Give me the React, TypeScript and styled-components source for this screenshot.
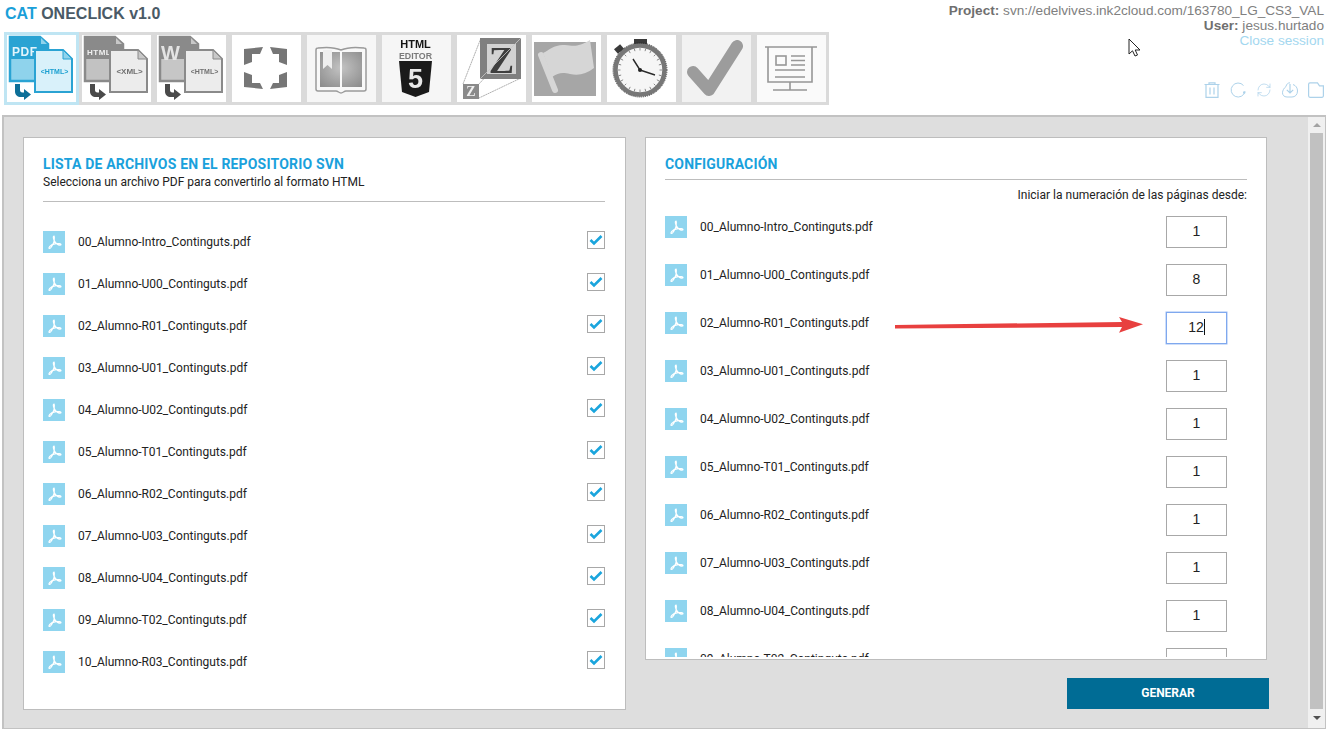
import React from "react";
import styled, { createGlobalStyle } from "styled-components";
import { RefreshCw } from "lucide-react";

const GlobalStyle = createGlobalStyle`
  html, body {
    margin: 0;
    padding: 0;
    height: 100%;
    overflow: hidden;
    background: #ffffff;
    font-family: "Liberation Sans", Arial, sans-serif;
  }
`;

const Page = styled.div`
  position: relative;
  width: 1328px;
  height: 731px;
  display: flex;
  flex-direction: column;
  box-sizing: border-box;
`;

const Header = styled.header`
  height: 115px;
  padding: 0 4px;
  display: flex;
  justify-content: space-between;
  box-sizing: border-box;
`;

const Brand = styled.div`
  display: flex;
  flex-direction: column;
`;

const Title = styled.h1`
  margin: 5px 0 0 1px;
  height: 27px;
  line-height: 17px;
  font-size: 16px;
  font-weight: 700;
  color: #4a5a66;

  span {
    color: #1a9fd9;
  }
`;

const Toolbar = styled.div`
  display: flex;
`;

const Tile = styled.div<{ $active?: boolean; $bg?: string }>`
  width: 75px;
  height: 73px;
  box-sizing: border-box;
  border: 3px solid ${(p) => (p.$active ? "#bfe5f3" : "#dadada")};
  background: ${(p) => p.$bg || "#ffffff"};

  svg {
    display: block;
    margin: -4px -3px;
    filter: blur(0.3px);
  }
`;

const Session = styled.div`
  width: 420px;
  padding-top: 3px;
  display: flex;
  flex-direction: column;
  align-items: flex-end;
  font-size: 13.6px;
  line-height: 15px;
  color: #808080;

  b {
    color: #6f6f6f;
  }
`;

const CloseLink = styled.a`
  color: #a3d7ef;
`;

const ActionBar = styled.div`
  margin-top: 34px;
  display: flex;
  gap: 10px;
  color: #add2ea;
`;

const Main = styled.main`
  position: relative;
  margin: 0 2px;
  height: 614px;
  box-sizing: border-box;
  border: solid #c2c2c2;
  border-width: 2px 1px 1px 2px;
  background: #dedede;
  display: flex;
  padding: 20px 0 0 19px;
`;

const Card = styled.section`
  box-sizing: border-box;
  background: #ffffff;
  border: 1px solid #bdbdbd;
  padding: 18px 19px 0;
  font-family: Roboto, "Liberation Sans", sans-serif;
  display: flex;
  flex-direction: column;
`;

const LeftCard = styled(Card)`
  width: 603px;
  height: 573px;
  padding-right: 20px;
`;

const RightColumn = styled.div`
  margin-left: 19px;
  width: 624px;
  display: flex;
  flex-direction: column;
  align-items: flex-start;
`;

const RightCard = styled(Card)`
  width: 622px;
  height: 523px;
  padding-bottom: 2px;
`;

const CardTitle = styled.h2`
  margin: 0;
  font-size: 14px;
  line-height: 16px;
  font-weight: 700;
  letter-spacing: 0.18px;
  color: #1aa1dc;
`;

const CardSub = styled.p`
  margin: 2px 0 0;
  font-size: 12px;
  line-height: 16px;
  color: #222222;
`;

const Rule = styled.hr<{ $top: number }>`
  margin: ${(p) => p.$top}px 0 0;
  border: 0;
  border-top: 1px solid #bdbdbd;
`;

const FileRow = styled.div`
  height: 42px;
  display: flex;
  align-items: flex-start;
  font-size: 12px;
  color: #222222;
`;

const FileList = styled.div`
  margin-top: 29px;
`;

const PdfBox = styled.span`
  width: 22px;
  height: 22px;
  flex: none;
  background: #8fd5ef;
  display: flex;
  align-items: center;
  justify-content: center;
`;

const FileName = styled.span`
  flex: 1;
  margin-left: 13px;
  line-height: 22px;
`;

const Check = styled.span`
  width: 18px;
  height: 18px;
  box-sizing: border-box;
  border: 1px solid #a8a8a8;
  display: flex;
  align-items: center;
  justify-content: center;
`;

const StartHint = styled.div`
  margin-top: 7px;
  text-align: right;
  font-size: 12px;
  line-height: 16px;
  color: #222222;
`;

const ScrollArea = styled.div`
  margin-top: 13px;
  flex: 1;
  overflow: hidden;
`;

const PageRow = styled.div`
  height: 48px;
  display: flex;
  align-items: flex-start;
  font-size: 12px;
  color: #222222;
`;

const PageInput = styled.div<{ $focus?: boolean }>`
  width: 61px;
  height: 32px;
  margin-right: 20px;
  box-sizing: border-box;
  border: 1px solid ${(p) => (p.$focus ? "#7fa8ee" : "#a8a8a8")};
  box-shadow: ${(p) => (p.$focus ? "0 0 0 0.5px #9dbcf2" : "none")};
  font-family: "Liberation Sans", Arial, sans-serif;
  font-size: 14px;
  line-height: 29px;
  text-align: center;
  color: #222222;
`;

const Caret = styled.i`
  display: inline-block;
  width: 1px;
  height: 16px;
  vertical-align: -3px;
  background: #111111;
`;

const Generate = styled.button`
  margin: 18px 0 0 422px;
  width: 202px;
  height: 31px;
  border: 0;
  padding: 0 0 2px;
  background: #006c95;
  color: #ffffff;
  font-family: Roboto, "Liberation Sans", sans-serif;
  font-size: 12px;
  font-weight: 700;
`;

const Scrollbar = styled.div`
  position: absolute;
  top: 0;
  right: 0;
  width: 17px;
  height: 100%;
  background: #f0f0f0;
  display: flex;
  flex-direction: column;
  align-items: center;
`;

const Thumb = styled.div`
  flex: 1;
  width: 13px;
  margin: 16px 0 19px;
  background: #c1c1c1;
`;

const ArrowGlyph = styled.div<{ $up?: boolean }>`
  position: absolute;
  ${(p) => (p.$up ? "top: 6px;" : "bottom: 8px;")}
  width: 0;
  height: 0;
  border-left: 4px solid transparent;
  border-right: 4px solid transparent;
  ${(p) => (p.$up ? "border-bottom: 4px solid #a3a3a3;" : "border-top: 4px solid #505050;")}
`;

const RedArrow = styled.svg`
  position: absolute;
  left: 895px;
  top: 315px;
`;

const Pointer = styled.svg`
  position: absolute;
  left: 1128px;
  top: 38px;
`;

const files = [
  "00_Alumno-Intro_Continguts.pdf",
  "01_Alumno-U00_Continguts.pdf",
  "02_Alumno-R01_Continguts.pdf",
  "03_Alumno-U01_Continguts.pdf",
  "04_Alumno-U02_Continguts.pdf",
  "05_Alumno-T01_Continguts.pdf",
  "06_Alumno-R02_Continguts.pdf",
  "07_Alumno-U03_Continguts.pdf",
  "08_Alumno-U04_Continguts.pdf",
  "09_Alumno-T02_Continguts.pdf",
  "10_Alumno-R03_Continguts.pdf",
];

const pageStarts = ["1", "8", "12", "1", "1", "1", "1", "1", "1", "1"];

function PdfIcon() {
  return (
    <PdfBox>
      <svg width="18" height="18" viewBox="0 0 18 18" fill="none" stroke="#ffffff" strokeWidth="1.2">
        <path d="M9 3c-.9 0-.9 1.600 0 4 .6 1.700 2 3.300 3.300 4.200 1.400 1 3.700 1.300 3.700.3 0-1-2.700-1.100-5-.8-2.700.4-5 1.200-6.200 2.600-1 1.200-1 2.200-.3 2.200.9 0 2.500-2.400 3.600-4.800C9 10 9.900 4 9 3z" />
      </svg>
    </PdfBox>
  );
}

function CheckMark() {
  return (
    <Check>
      <svg width="14" height="12" viewBox="0 0 14 12" fill="none" stroke="#1aa5dd" strokeWidth="2.6">
        <path d="M1.500 6 5 9.500 12.500 2" />
      </svg>
    </Check>
  );
}

type DocsProps = {
  stroke: string;
  fold: string;
  backFill: string;
  frontFill: string;
  arrow: string;
  badge: string;
  badgeSize: number;
  badgeX: number;
  badgeY: number;
  label: string;
  inner: string;
  innerSize: number;
  innerColor: string;
};

// two overlapping sheets with a turn-down arrow, used by the first three tiles
function DocsIcon(p: DocsProps) {
  return (
    <svg width="75" height="74" viewBox="0 0 75 74">
      <path d="M6 6h30l8 7v37H6z" fill={p.backFill} stroke={p.stroke} strokeWidth="2.5" />
      <path d="M6 6h30l8 7v15H6z" fill={p.stroke} />
      <path d="M37 7v6h6z" fill={p.fold} />
      <text x={p.badgeX} y={p.badgeY} fontFamily="Liberation Sans" fontWeight="700" fontSize={p.badgeSize} letterSpacing="0.5" fill={p.badge}>
        {p.label}
      </text>
      <path d="M31 19h28l9 9v33H31z" fill={p.frontFill} stroke={p.stroke} strokeWidth="2" />
      <path d="M59 19v9h9z" fill={p.fold} stroke={p.stroke} strokeWidth="1" />
      <text x="50.500" y="43" textAnchor="middle" fontFamily="Liberation Sans" fontWeight="700" fontSize={p.innerSize} fill={p.innerColor}>
        {p.inner}
      </text>
      <path d="M11 53h5v6c0 1.500.8 2.500 2.500 2.500H20V58l7 5.500-7 5.500v-3h-3c-3.500 0-6-2-6-5.500z" fill={p.arrow} />
    </svg>
  );
}

function FullscreenIcon() {
  return (
    <svg width="75" height="74" viewBox="0 0 75 74" fill="#767676">
      <path d="M15 18 34 16l-3 7h-8v8l-8 3z" />
      <path d="M58 18 41 16l3 7h6v8l8 3z" />
      <path d="M15 56l19 2-3-6h-8v-8l-8-3z" />
      <path d="M58 56l-17 2 3-6h6v-8l8-3z" />
    </svg>
  );
}

function BookIcon() {
  return (
    <svg width="75" height="74" viewBox="0 0 75 74">
      <defs>
        <radialGradient id="bookShade" cx="50%" cy="45%" r="70%">
          <stop offset="0%" stopColor="#c3c3c3" />
          <stop offset="100%" stopColor="#8d8d8d" />
        </radialGradient>
      </defs>
      <path d="M14 17c8-1 16-1 23 2 7-3 15-3 23-2 1 0 2 1 2 2v39c0 1-1 2-2 2H42c-2 0-3 2-5 2s-3-2-5-2H14c-1 0-2-1-2-2V19c0-1 1-2 2-2z" fill="#f8f8f8" stroke="#9a9a9a" strokeWidth="1.5" />
      <path d="M16 21h20v35H16zM38 21h20v35H38z" fill="url(#bookShade)" />
      <path d="M19 19h9v19l-4.500-4-4.500 4z" fill="#efefef" />
    </svg>
  );
}

function Html5Icon() {
  return (
    <svg width="75" height="74" viewBox="0 0 75 74" fontFamily="Liberation Sans" fontWeight="700" textAnchor="middle">
      <text x="36.500" y="16.500" fontSize="11" fill="#161616">HTML</text>
      <text x="36.500" y="27.500" fontSize="8.800" fill="#7a7a7a">EDITOR</text>
      <path d="M20 30h33l-3 31-13.500 5L23 61z" fill="#1a1a1a" />
      <text x="36.500" y="57" fontSize="27" fill="#e8e8e8">5</text>
    </svg>
  );
}

function ZoomIcon() {
  return (
    <svg width="75" height="74" viewBox="0 0 75 74">
      <path d="M27 7 9 53M67 7 25 53M67 47 25 67" stroke="#9c9c9c" strokeWidth="0.8" fill="none" strokeDasharray="2 0.5" />
      <rect x="26" y="7" width="41" height="41" fill="#7f7f7f" />
      <rect x="33" y="13" width="29" height="30" fill="#d2d2d2" />
      <text x="47.500" y="42" textAnchor="middle" fontFamily="Liberation Serif" fontWeight="700" fontSize="38" fill="#3e3e3e">Z</text>
      <path d="M67 7 26 48" stroke="#c8c8c8" strokeWidth="0.8" />
      <rect x="9" y="53" width="16" height="15" fill="#8a8a8a" />
      <text x="17" y="65" textAnchor="middle" fontFamily="Liberation Serif" fontWeight="700" fontSize="14" fill="#f0f0f0">Z</text>
    </svg>
  );
}

function FlagIcon() {
  return (
    <svg width="75" height="74" viewBox="0 0 75 74">
      <rect x="5" y="11" width="62" height="54" fill="#a6a6a6" />
      <path d="M12 24 26 59" stroke="#d6d6d6" strokeWidth="6" strokeLinecap="round" />
      <path d="M14 22c6-3 12-9 22-8 9 1 14 2 25-5l4 28c-8 6-15 8-24 6-8-2-12-1-18 3z" fill="#d6d6d6" />
    </svg>
  );
}

function StopwatchIcon() {
  const ticks = Array.from({ length: 24 }, (_, i) => i * 15);
  return (
    <svg width="75" height="74" viewBox="0 0 75 74">
      <rect x="30" y="8" width="13" height="6" fill="#3a3a3a" />
      <rect x="11" y="15" width="8" height="6" fill="#3a3a3a" transform="rotate(-40 15 18)" />
      <circle cx="36" cy="39" r="24.500" fill="#f6f6f6" stroke="#777777" strokeWidth="4.500" />
      <circle cx="36" cy="39" r="27" fill="none" stroke="#222222" strokeWidth="0.8" strokeDasharray="1 1" />
      {ticks.map((a) => (
        <path key={a} d="M36 17v2.500" stroke="#777777" strokeWidth="0.8" transform={`rotate(${a} 36 39)`} />
      ))}
      <path d="M36 39 29 28M36 39l15 5" stroke="#2a2a2a" strokeWidth="1.4" fill="none" />
      <circle cx="36" cy="39" r="2" fill="#222222" />
    </svg>
  );
}

function CheckTileIcon() {
  return (
    <svg width="75" height="74" viewBox="0 0 75 74">
      <path d="M14 41 30 59 58 15" fill="none" stroke="#9c9c9c" strokeWidth="12" strokeLinejoin="round" strokeLinecap="round" />
    </svg>
  );
}

function SlideIcon() {
  return (
    <svg width="75" height="74" viewBox="0 0 75 74" fill="none" stroke="#979797" strokeWidth="1.6">
      <path d="M11 16h52M14 16v35h44V16M36 51v8M19 59h34" />
      <rect x="22" y="25" width="10" height="9" />
      <path d="M37 25h14M37 29.500h14M37 34h14M21 39h30M21 46h30" />
    </svg>
  );
}

function TrashIcon() {
  return (
    <svg width="16" height="16" viewBox="0 0 16 16" fill="none" stroke="currentColor" strokeWidth="1.2">
      <path d="M0.500 2.500h15M5 2.500V.8h6v1.700M2 2.500v12.800h12V2.500M6 5.500v7M10 5.500v7" />
    </svg>
  );
}

function ReloadIcon() {
  return (
    <svg width="16" height="16" viewBox="0 0 16 16" fill="none" stroke="currentColor" strokeWidth="1">
      <path d="M13.500 3.500A7 7 0 1 0 15 9.500" />
      <circle cx="14.200" cy="10.500" r="1.200" fill="currentColor" stroke="none" />
    </svg>
  );
}

function DownloadIcon() {
  return (
    <svg width="16" height="16" viewBox="0 0 16 16" fill="none" stroke="currentColor" strokeWidth="1">
      <path d="M4 4.500C4.500 2 6 .8 8 .8c0 0 0 0 0 0M11 2.500c3 1 4.500 3.500 4.500 6.500 0 3.800-2.500 6-5.500 6H5c-3 0-4.500-2-4.500-4.200C.5 8.500 2 6 4 4.500" />
      <path d="M8 2v9M4.800 7.800 8 11l3.200-3.200" strokeWidth="1.2" />
    </svg>
  );
}

function FolderIcon() {
  return (
    <svg width="16" height="16" viewBox="0 0 16 16" fill="none" stroke="currentColor" strokeWidth="1.2">
      <path d="M2 .8h7.500l2 3h3.900v10a1.500 1.500 0 0 1-1.500 1.500H2A1.500 1.500 0 0 1 .6 13.800V2.300A1.500 1.500 0 0 1 2 .8z" />
    </svg>
  );
}

export default function App() {
  return (
    <Page>
      <GlobalStyle />
      <Header>
        <Brand>
          <Title>
            <span>CAT</span> ONECLICK v1.0
          </Title>
          <Toolbar>
            <Tile $active>
              <DocsIcon stroke="#2aa3d3" fold="#8fd3ec" backFill="#8fd3ec" frontFill="#d9f1fa" arrow="#0d6f98" badge="#e3f4fb" badgeSize={12} badgeX={8} badgeY={25} label="PDF" inner="<HTML>" innerSize={7} innerColor="#1a9fd0" />
            </Tile>
            <Tile>
              <DocsIcon stroke="#8a8a8a" fold="#c8c8c8" backFill="#c2c2c2" frontFill="#ececec" arrow="#4a4a4a" badge="#f0f0f0" badgeSize={8} badgeX={8} badgeY={24} label="HTML" inner="<XML>" innerSize={8} innerColor="#707070" />
            </Tile>
            <Tile>
              <DocsIcon stroke="#8a8a8a" fold="#c8c8c8" backFill="#c6c6c6" frontFill="#ececec" arrow="#4a4a4a" badge="#e4e4e4" badgeSize={20} badgeX={7} badgeY={29} label="W" inner="<HTML>" innerSize={7} innerColor="#707070" />
            </Tile>
            <Tile>
              <FullscreenIcon />
            </Tile>
            <Tile $bg="#f6f6f6">
              <BookIcon />
            </Tile>
            <Tile $bg="#f6f6f6">
              <Html5Icon />
            </Tile>
            <Tile>
              <ZoomIcon />
            </Tile>
            <Tile>
              <FlagIcon />
            </Tile>
            <Tile>
              <StopwatchIcon />
            </Tile>
            <Tile $bg="#f2f2f2">
              <CheckTileIcon />
            </Tile>
            <Tile $bg="#fafafa">
              <SlideIcon />
            </Tile>
          </Toolbar>
        </Brand>
        <Session>
          <div>
            <b>Project:</b> svn://edelvives.ink2cloud.com/163780_LG_CS3_VAL
          </div>
          <div>
            <b>User:</b> jesus.hurtado
          </div>
          <CloseLink>Close session</CloseLink>
          <ActionBar>
            <TrashIcon />
            <ReloadIcon />
            <RefreshCw size={16} strokeWidth={1.1} />
            <DownloadIcon />
            <FolderIcon />
          </ActionBar>
        </Session>
      </Header>
      <Main>
        <LeftCard>
          <CardTitle>LISTA DE ARCHIVOS EN EL REPOSITORIO SVN</CardTitle>
          <CardSub>Selecciona un archivo PDF para convertirlo al formato HTML</CardSub>
          <Rule $top={11} />
          <FileList>
            {files.map((f) => (
              <FileRow key={f}>
                <PdfIcon />
                <FileName>{f}</FileName>
                <CheckMark />
              </FileRow>
            ))}
          </FileList>
        </LeftCard>
        <RightColumn>
          <RightCard>
            <CardTitle>CONFIGURACIÓN</CardTitle>
            <Rule $top={7} />
            <StartHint>Iniciar la numeración de las páginas desde:</StartHint>
            <ScrollArea>
              {files.slice(0, 10).map((f, i) => (
                <PageRow key={f}>
                  <PdfIcon />
                  <FileName>{f}</FileName>
                  <PageInput $focus={i === 2}>
                    {pageStarts[i]}
                    {i === 2 && <Caret />}
                  </PageInput>
                </PageRow>
              ))}
            </ScrollArea>
          </RightCard>
          <Generate>GENERAR</Generate>
        </RightColumn>
        <Scrollbar>
          <ArrowGlyph $up />
          <Thumb />
          <ArrowGlyph />
        </Scrollbar>
      </Main>
      <RedArrow width="250" height="22" viewBox="0 0 250 22">
        <path d="M0 10 L227 7 L224 2 L248 9.300 L224 17.700 L227 12 L0 13.500z" fill="#e8403f" />
      </RedArrow>
      <Pointer width="14" height="20" viewBox="0 0 14 20">
        <path d="M1 1v15l3.500-3.200L7 18l2.500-1-2.300-5H12z" fill="#ffffff" stroke="#222222" strokeWidth="1" />
      </Pointer>
    </Page>
  );
}
